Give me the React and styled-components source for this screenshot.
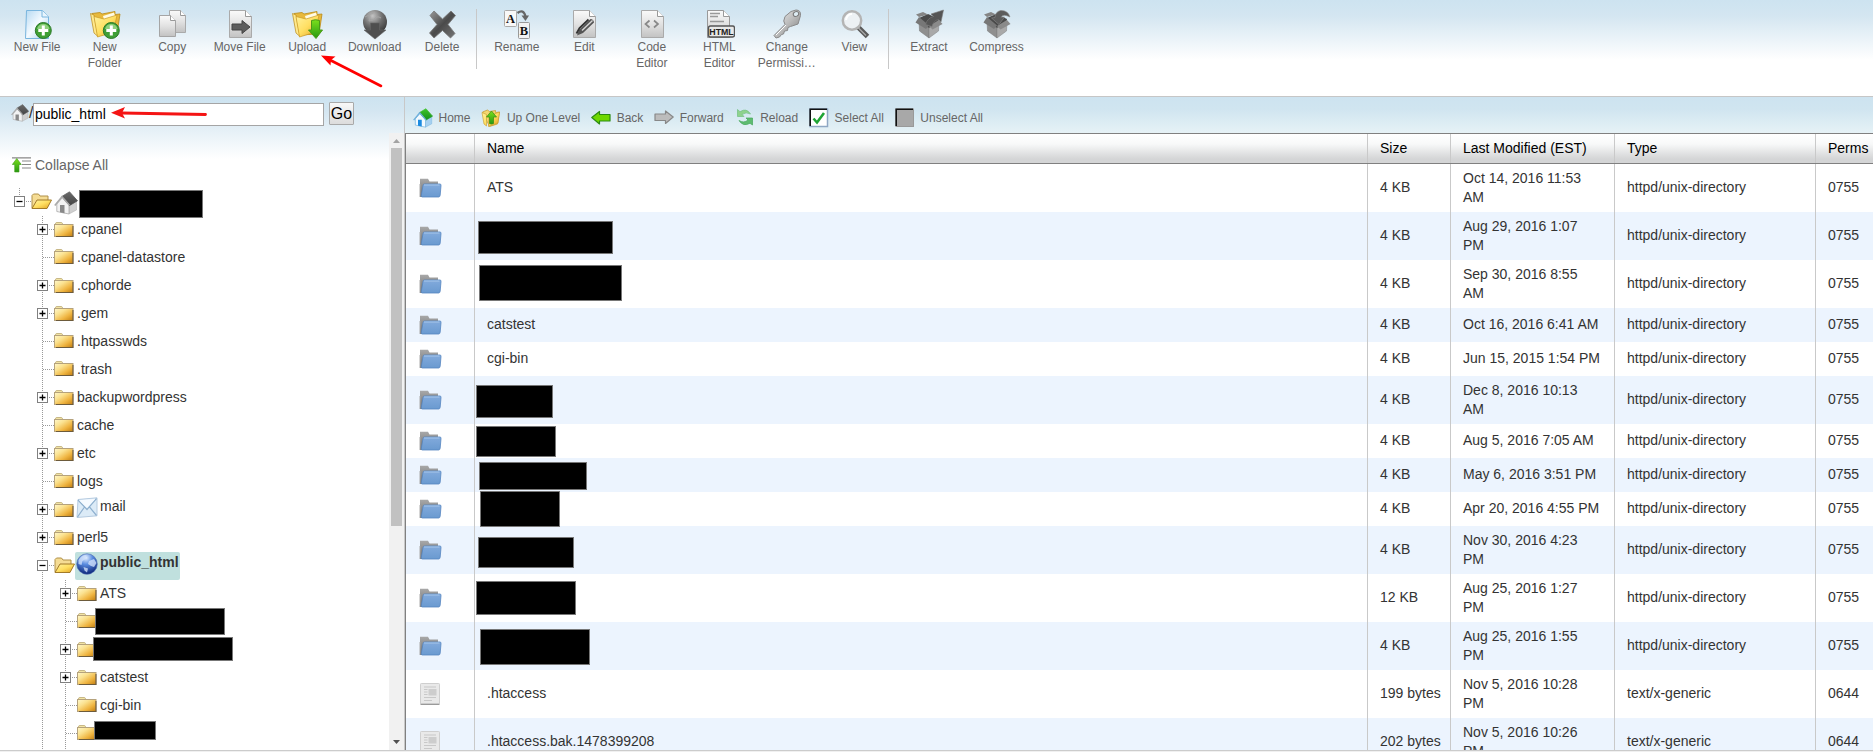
import React from "react";
import styled, { createGlobalStyle } from "styled-components";

const Global = createGlobalStyle`
  *, *::before, *::after { box-sizing: border-box; }
  html, body { margin: 0; padding: 0; overflow: hidden; }
  body { font-family: "Liberation Sans", Arial, sans-serif; font-size: 14px; color: #333; background: #fff; }
`;

const Page = styled.div`
  position: relative;
  display: flex;
  flex-direction: column;
  width: 1873px;
  height: 752px;
  overflow: hidden;
  background: #f0f0f0;
`;

const Toolbar = styled.div`
  flex: none;
  display: flex;
  align-items: flex-start;
  height: 97px;
  padding: 9px 0 0 3.4px;
  border-bottom: 1px solid #c6c6c6;
  background: linear-gradient(#cde3f0 0, #d4e6f1 16px, #fff 60px);
`;

const ToolGroup = styled.div`
  display: flex;
  height: 60px;
  & + & { border-left: 1px solid #c8c8c8; padding-left: 6.2px; }
`;

const Tool = styled.div`
  width: 67.5px;
  display: flex;
  flex-direction: column;
  align-items: center;
  font-size: 12px;
  line-height: 16px;
  color: #666;
  text-align: center;
  svg { flex: none; display: block; margin-bottom: -2px; }
`;

const Body = styled.div`
  flex: none;
  display: flex;
  height: 654px;
  border-bottom: 1px solid #ccc;
  background: #fff;
`;

const Sidebar = styled.div`
  flex: none;
  width: 405px;
  display: flex;
  flex-direction: column;
  border-right: 1px solid #c8c8c8;
  background: linear-gradient(#cde3f0 0, #d4e6f1 14px, #fff 62px) no-repeat;
`;

const PathBar = styled.div`
  flex: none;
  display: flex;
  align-items: flex-start;
  height: 36px;
  padding: 6px 0 0 11px;
  svg { flex: none; margin-top: 1px; }
`;

const Slash = styled.span`
  width: 4px;
  font-size: 16px;
  line-height: 20px;
`;

const PathInput = styled.input`
  width: 291px;
  height: 23px;
  padding: 0 1px 1px;
  border: 1px solid #a5a5a5;
  background: #fff;
  color: #000;
  font: 14px "Liberation Sans", Arial, sans-serif;
  outline: none;
`;

const GoButton = styled.button`
  width: 25px;
  height: 23px;
  margin: -1px 0 0 5px;
  padding: 0;
  border: 1px solid #a9a9a9;
  border-radius: 1px;
  background: linear-gradient(#f8f8f8, #dcdcdc);
  color: #000;
  font: 16px/20px "Liberation Sans", Arial, sans-serif;
`;

const SidebarScroll = styled.div`
  flex: 1;
  min-height: 0;
  display: flex;
`;

const SidebarContent = styled.div`
  flex: 1;
  min-width: 0;
  overflow: hidden;
`;

const Collapse = styled.div`
  display: flex;
  align-items: center;
  gap: 4px;
  height: 20px;
  margin: 22px 0 13px 12px;
  color: #666;
`;

const Scrollbar = styled.div`
  width: 15px;
  display: flex;
  flex-direction: column;
  align-items: center;
  background: #f1f1f1;
`;

const Thumb = styled.div`
  width: 11px;
  height: 378px;
  margin-bottom: auto;
  background: #c1c1c1;
`;

const ScrollArrow = styled.svg`
  flex: none;
  display: block;
`;

const TreeBranch = styled.div`
  margin-left: ${(p) => p.$indent}px;
  background: repeating-linear-gradient(#999 0 1px, transparent 1px 2px) 5px 0 / 1px 100% no-repeat;
`;

const TreeRow = styled.div`
  display: flex;
  align-items: center;
  height: 28px;
  position: relative;
`;

const RootRow = styled(TreeRow)`
  margin-left: 14px;
  background: repeating-linear-gradient(#999 0 1px, transparent 1px 2px) 5px 0 / 1px 10px no-repeat;
`;

const Toggle = styled.span`
  flex: none;
  position: relative;
  width: 17px;
  height: 11px;
  margin-top: -2px;
  &::before {
    content: "";
    position: absolute;
    left: 6px;
    right: 0;
    top: 5px;
    height: 1px;
    background: repeating-linear-gradient(90deg, #999 0 1px, transparent 1px 2px);
  }
  svg { position: relative; display: block; }
`;

const FolderSlot = styled.span`
  flex: none;
  width: 21px;
  height: 17px;
  margin-top: ${(p) => (p.$leaf ? -4 : -2)}px;
  svg { display: block; }
`;

const NodeLabel = styled.span`
  display: flex;
  align-items: flex-start;
  padding-left: 2px;
  height: 28px;
  line-height: 26px;
  white-space: nowrap;
  ${(p) => p.$icon && `
    padding: 1px 2px 0 1px;
    gap: 2px;
    line-height: 18px;
    border-radius: 2px;
  `}
  ${(p) => p.$selected && `
    background: #c0e0de;
    font-weight: bold;
    padding-right: 1px;
  `}
`;

const HomeSlot = styled.span`
  padding: 1px 0 0 2px;
  svg { display: block; }
`;

const Redaction = styled.span`
  position: absolute;
  z-index: 1;
  left: ${(p) => p.$x}px;
  top: ${(p) => p.$y}px;
  width: ${(p) => p.$w}px;
  height: ${(p) => p.$h}px;
  background: #000;
  border: 1px solid #777;
`;

const Main = styled.div`
  flex: 1;
  min-width: 0;
  display: flex;
  flex-direction: column;
`;

const ActionBar = styled.div`
  flex: none;
  display: flex;
  align-items: center;
  gap: 10.9px;
  height: 36px;
  padding: 6px 0 0 8px;
  background: linear-gradient(#cde3f0 0, #d0e5f0 12px, #e6f2f6 36px);
`;

const Action = styled.div`
  display: flex;
  align-items: center;
  gap: 5.5px;
  font-size: 12px;
  color: #666;
  svg { display: block; }
`;

const Table = styled.div`
  flex: 1;
  min-height: 0;
  overflow: hidden;
  border-left: 1px solid #808080;
`;

const columns = "68px 893px 83px 164px 201px 1fr";

const HeaderRow = styled.div`
  display: grid;
  grid-template-columns: ${columns};
  height: 31px;
  border-top: 1px solid #808080;
  border-bottom: 1px solid #808080;
  background: linear-gradient(#fff 0, #f8f9f9 10px, #d4d5d6 25px, #d4d5d6 100%);
  color: #000;
`;

const Row = styled.div`
  display: grid;
  grid-template-columns: ${columns};
  min-height: 34px;
  background: ${(p) => (p.$striped ? "#ecf4fe" : "#fff")};
`;

const Cell = styled.div`
  position: relative;
  display: flex;
  align-items: center;
  padding: ${(p) => (p.$wrapped ? "5px 0 5px 12px" : "4px 0 6px 12px")};
  line-height: 19px;
  white-space: pre;
  & + & { border-left: 1px solid #c9c9c9; }
`;

const HeadCell = styled(Cell)`
  padding: 0 0 1px 12px;
`;

const IconCell = styled(Cell)`
  padding: 0 0 0 13px;
`;

const Annotations = styled.svg`
  position: absolute;
  left: 0;
  top: 0;
  pointer-events: none;
`;

const Defs = styled.svg`
  position: absolute;
`;

const Grad = ({ id, stops, diag }) => (
  <linearGradient id={id} x1="0" y1="0" x2={diag ? "1" : "0"} y2="1">
    {stops.map((c, i) => (
      <stop key={i} offset={i / (stops.length - 1)} stopColor={c} />
    ))}
  </linearGradient>
);

const SharedDefs = () => (
  <Defs width="0" height="0">
    <defs>
      <Grad id="page" diag stops={["#b5d9f2", "#f4faff", "#9ccdf0"]} />
      <Grad id="grayPage" stops={["#fafafa", "#e2e2e2", "#c2c2c2"]} />
      <Grad id="yellow" diag stops={["#fff3a0", "#ffdf62", "#e0a020"]} />
      <Grad id="tree" diag stops={["#fff8cc", "#fbe290", "#efb440", "#c07c10"]} />
      <Grad id="green" stops={["#7be01c", "#259812"]} />
      <Grad id="roof" stops={["#3fc42c", "#14901a"]} />
      <Grad id="slate" stops={["#6a6a6a", "#444"]} />
      <Grad id="dark" diag stops={["#9a9a9a", "#4a4a4a", "#777"]} />
      <Grad id="metal" diag stops={["#f4f4f4", "#bbb", "#777"]} />
      <Grad id="blue" stops={["#82aadc", "#6a9ad0"]} />
      <Grad id="tab" stops={["#a8a8a8", "#6c6c6c"]} />
      <radialGradient id="ball" cx="0.4" cy="0.25" r="0.8">
        <stop offset="0" stopColor="#c4c4c4" />
        <stop offset="0.5" stopColor="#707070" />
        <stop offset="1" stopColor="#333" />
      </radialGradient>
      <radialGradient id="globe" cx="0.45" cy="0.2" r="0.8">
        <stop offset="0" stopColor="#e4f0ff" />
        <stop offset="0.4" stopColor="#5a8ce0" />
        <stop offset="1" stopColor="#0a2478" />
      </radialGradient>
    </defs>
  </Defs>
);

const Icon32 = ({ children }) => (
  <svg width="32" height="32" viewBox="0 0 32 32">{children}</svg>
);

const PlusBadge = () => (
  <g>
    <circle cx="22.300" cy="21.500" r="8" fill="#3f9f35" stroke="#2d7a2a" />
    <path d="M16 20a6.500 6.500 0 0 1 12.600 0z" fill="#8ed07c" />
    <path d="M22.300 16.500v10M17.300 21.500h10" stroke="#fff" strokeWidth="3" />
  </g>
);

const YellowFolder = () => (
  <g strokeLinejoin="round">
    <path d="M3 4.500l8-1 2 1.500 13-2.500v3l5-.5-3 20-20 1z" fill="#e8b93c" stroke="#b98a18" strokeWidth=".8" />
    <path d="M14 7l11-3.500 1.500 5-11 4z" fill="#fffbe4" />
    <path d="M1.500 4.500L5 6l4 21.500-4-3.500z" fill="#ffe98c" stroke="#b98a18" strokeWidth=".7" />
    <path d="M5 7.500l10 2.500 13-4L24.500 23 8.500 28z" fill="url(#yellow)" stroke="#c99a25" strokeWidth=".7" />
  </g>
);

const OpenBox = ({ children }) => (
  <Icon32>
    <path d="M6 9l9-4 11 5-1 5-9 5-10-5z" fill="#4a4a4a" />
    <path d="M6 12.500l10 6.500v10L6.500 22z" fill="#8f8f8f" stroke="#777" strokeWidth=".5" />
    <path d="M26 12.500L16 19v10l9.500-7z" fill="#a9a9a9" stroke="#808080" strokeWidth=".5" />
    <path d="M6 8l-3.500 5.500L13 20l3-3.500z" fill="#777" />
    <path d="M26 11l3.500 4L19.500 20.500 16 17z" fill="#8a8a8a" />
    <path d="M6 8L3 5.500l7-2.500 5 2.500z" fill="#858585" />
    {children}
  </Icon32>
);

const toolIcons = {
  newFile: (
    <Icon32>
      <path d="M5.500 1.500h16l6 6v22H4.500z" fill="url(#page)" stroke="#79b5de" />
      <path d="M21 1.500v6.500h7" fill="#e9f5fd" stroke="#79b5de" />
      <PlusBadge />
    </Icon32>
  ),
  newFolder: <Icon32><YellowFolder /><PlusBadge /></Icon32>,
  copy: (
    <Icon32>
      <path d="M13.500 1.500h11l5 5v17h-16z" fill="url(#grayPage)" stroke="#aaa" />
      <path d="M24.500 1.500v5h5" fill="#fff" stroke="#999" />
      <path d="M3.500 6.500h11l5 5v16h-16z" fill="url(#grayPage)" stroke="#a5a5a5" />
      <path d="M14.500 6.500v5h5" fill="#fff" stroke="#999" />
    </Icon32>
  ),
  move: (
    <Icon32>
      <path d="M5.500 1.500h16l6 6v21h-22z" fill="url(#grayPage)" stroke="#aaa" />
      <path d="M21.500 1.500v6h6" fill="#fff" stroke="#999" />
      <path d="M8 15h10v-3.500l8 6.500-8 6.500V21H8z" fill="#5d5d5d" stroke="#444" />
    </Icon32>
  ),
  upload: (
    <Icon32>
      <YellowFolder />
      <path d="M20.500 11.500q4-1.500 8 0V21h3l-6.500 8.500-7.500-8.500h3z" fill="url(#green)" stroke="#4a9a18" />
    </Icon32>
  ),
  download: (
    <Icon32>
      <circle cx="16" cy="13" r="12" fill="url(#ball)" />
      <path d="M10 4q2 4 0 8l4-1q4-5 8-2M6 8q6-3 10-5" stroke="#a4a4a4" fill="none" />
      <path d="M11.500 14h9v7H27L16 30 5 21h6.500z" fill="#4f4f4f" stroke="#666" strokeWidth=".6" />
    </Icon32>
  ),
  delete: (
    <Icon32>
      <path d="M8 2l8.500 8L25 2l4.500 4.500-7.500 9 7 9-4.500 4.500-8-7.500-8.500 7.500L3.500 24l7.500-8.500-7-9z" fill="url(#dark)" stroke="#777" strokeWidth=".8" />
    </Icon32>
  ),
  rename: (
    <Icon32>
      <rect x="3.500" y="1.500" width="12" height="16" rx="1" fill="#f8f8f8" stroke="#aaa" />
      <text x="9.500" y="13.500" fontFamily="Liberation Serif, serif" fontSize="12.500" fontWeight="bold" textAnchor="middle" fill="#111">A</text>
      <rect x="17.500" y="13.500" width="11" height="16" rx="1" fill="#f2f2f2" stroke="#999" />
      <text x="23" y="26" fontFamily="Liberation Serif, serif" fontSize="12.500" fontWeight="bold" textAnchor="middle" fill="#111">B</text>
      <path d="M16.500 4q6-4.500 8 3.500" stroke="#666" strokeWidth="2.200" fill="none" />
      <path d="M20.500 6.500h7.500l-3.500 5.500z" fill="#666" />
    </Icon32>
  ),
  edit: (
    <Icon32>
      <path d="M5.500 1.500h16l6 6v21h-22z" fill="url(#grayPage)" stroke="#aaa" />
      <path d="M21.500 1.500v6h6" fill="#fff" stroke="#999" />
      <path d="M22.500 10q3 0 3.500 3.500L15 24l-6 2.500 2-5.500z" fill="#555" />
      <path d="M14 21.500L24.500 11.500" stroke="#d5d5d5" strokeWidth="1.500" />
      <path d="M8.500 24.500l3-5.500 9-8.500" stroke="#333" strokeWidth="1.800" fill="none" />
    </Icon32>
  ),
  code: (
    <Icon32>
      <path d="M5.500 1.500h16l6 6v21h-22z" fill="url(#grayPage)" stroke="#aaa" />
      <path d="M21.500 1.500v6h6" fill="#fff" stroke="#999" />
      <path d="M13.500 11.500l-4 3.500 4 3.500M18 11.500l4 3.500-4 3.500" fill="none" stroke="#888" strokeWidth="1.700" />
    </Icon32>
  ),
  html: (
    <Icon32>
      <path d="M4.500 1.500h16l6 6v21h-22z" fill="url(#grayPage)" stroke="#999" />
      <path d="M20.500 1.500v6h6" fill="#fff" stroke="#999" />
      <path d="M7 4.500h10M7 7.500h8M7 12.500h14" stroke="#999" strokeWidth="1.300" />
      <rect x="5.500" y="17" width="26" height="11" rx="2" fill="#e8e8e8" stroke="#555" strokeWidth="1.400" />
      <text x="18.500" y="25.700" fontFamily="Liberation Sans, sans-serif" fontSize="8.800" fontWeight="bold" textAnchor="middle" fill="#222">HTML</text>
    </Icon32>
  ),
  key: (
    <Icon32>
      <path d="M3 26.500L14 15.500q-2.500-3 0-8L20 2.500l5-1.500q5 0 4.500 5.500L27 15l-7.500 2.500-2.500 1-.5 3-3 .5-1 3-2 .5-2 2.500-3.500 1z" fill="url(#metal)" stroke="#8a8a8a" />
      <ellipse cx="25" cy="5" rx="2.800" ry="2.300" fill="#ddebf2" stroke="#777" transform="rotate(-25 25 5)" />
      <path d="M5 26l10-10" stroke="#fff" />
    </Icon32>
  ),
  view: (
    <Icon32>
      <path d="M20.500 18.500l9 9" stroke="#5a5a5a" strokeWidth="5" />
      <path d="M20 18.500l8 8" stroke="#aaa" strokeWidth="1.200" />
      <circle cx="14" cy="11.500" r="9.200" fill="#edf1f4" stroke="#b4b4b4" strokeWidth="2.500" />
      <path d="M8 11q1-6 6-6" stroke="#fff" strokeWidth="2" fill="none" />
    </Icon32>
  ),
  extract: (
    <OpenBox>
      <path d="M12.500 15.500q2-6.500 8-8L18 5l12.500-4-2.500 12-2.500-2.500q-5 1-6.500 7z" fill="#555" stroke="#7c7c7c" strokeWidth=".6" />
    </OpenBox>
  ),
  compress: (
    <OpenBox>
      <path d="M29 8q-2-7-9.500-6.500Q14 3 14 8.500L10.500 9l7.500 6.500 5.500-7.500-3.500.3Q22 4.500 29 8z" fill="#5c5c5c" stroke="#888" strokeWidth=".6" />
    </OpenBox>
  ),
};

const House = ({ size, roof = "url(#slate)", wall = "#f2f2f2", side = "#cfcfcf", door = "#888", edge = "#aaa" }) => (
  <svg width={size} height={size} viewBox="0 0 24 24">
    <path d="M15 13.500l7.500-4V19L15 23z" fill={side} stroke={edge} strokeWidth=".5" />
    <path d="M2.800 13L8.500 6.500 15 14v9L2.800 20.500z" fill={wall} stroke={edge} strokeWidth=".8" />
    <path d="M7.800 5.500L15.500 .8l8 9-8 4.700z" fill={roof} stroke={roof} strokeWidth=".8" strokeLinejoin="round" />
    <path d="M.8 14.500L8 5.800l7.500 8.500" fill="none" stroke={edge} strokeWidth="1.600" />
    <path d="M6 14h4.500v8.200L6 21.300z" fill={door} />
  </svg>
);

const actionIcons = {
  home: <House size={20} roof="url(#roof)" wall="#f2faff" side="#a5d0f0" door="#1b8be0" edge="#6fb0dc" />,
  up: (
    <svg width="20" height="20" viewBox="0 0 20 20">
      <path d="M1.500 4l5-2 2 1.500 6-1v2l4-.5-2 12-8 2.500z" fill="#f3d670" stroke="#c69828" strokeWidth=".7" />
      <path d="M1 4.500l4.500 2V18L3 16zM18.500 4L17 15l-9.500 3.500L8 8z" fill="url(#yellow)" stroke="#c69828" strokeWidth=".6" />
      <path d="M10.500 3l5 6h-3v6.500q-2 1-4 0V9h-3z" fill="url(#green)" stroke="#3e9216" strokeWidth=".8" />
    </svg>
  ),
  back: (
    <svg width="20" height="20" viewBox="0 0 20 20">
      <path d="M.8 9.500l7.700-6v3h10.500V13H8.500v3z" fill="#6fd800" stroke="#2c8b12" strokeWidth="1.200" strokeLinejoin="round" />
    </svg>
  ),
  forward: (
    <svg width="20" height="20" viewBox="0 0 20 20">
      <path d="M19.200 9l-7.700-6v3H1v6.500h10.500v3z" fill="#bcbcbc" stroke="#888" strokeWidth="1.200" strokeLinejoin="round" />
    </svg>
  ),
  reload: (
    <svg width="20" height="20" viewBox="0 0 20 20">
      <path d="M2.500 1.500v7h6.500L7 6.500q4-3 8.500-.5-4-6.500-10.500-2.300z" fill="#8fd28d" stroke="#70c080" strokeWidth=".7" />
      <path d="M17.500 17v-7H11l2 2q-4 3.500-9 .5 4 6.500 11 2.800z" fill="#5fbc70" stroke="#45a75a" strokeWidth=".7" />
    </svg>
  ),
  select: (
    <svg width="20" height="20" viewBox="0 0 20 20">
      <rect x="1" y="1" width="17.500" height="17.500" fill="#fff" stroke="#8fa8c4" strokeWidth="1.500" />
      <path d="M18 1.200H1.200V18" fill="none" stroke="#111" strokeWidth="1.600" />
      <path d="M4.500 10.500l3.500 4 7-9.500" fill="none" stroke="#20a535" strokeWidth="2.600" />
    </svg>
  ),
  unselect: (
    <svg width="20" height="20" viewBox="0 0 20 20">
      <rect x="1" y="1" width="17.500" height="17.500" fill="#a8a8a8" stroke="#999" />
      <path d="M18 1.200H1.200V18" fill="none" stroke="#111" strokeWidth="1.600" />
    </svg>
  ),
};

const TreeFolder = ({ open }) => (
  <svg width="21" height="17" viewBox="0 0 21 17">
    {open ? (
      <g>
        <path d="M1 15V2.500l1.500-1.500h5l1.500 2h8v5" fill="#f5dc94" stroke="#b09048" />
        <path d="M1 15.500L6 7h14.500l-4.500 8.500z" fill="url(#yellow)" stroke="#a27a28" />
      </g>
    ) : (
      <g>
        <path d="M1 3.500L2.200 1.500h5.500l1.300 2z" fill="#f2e4a4" stroke="#c8b888" />
        <rect x=".5" y="3.500" width="18.500" height="12" fill="url(#tree)" stroke="#b5a27c" />
        <path d="M2 15.500h17V5" fill="none" stroke="#3e2c10" strokeOpacity=".6" strokeWidth="1.200" />
      </g>
    )}
  </svg>
);

const ToggleBox = ({ minus }) => (
  <svg width="11" height="11" viewBox="0 0 11 11">
    <rect x=".5" y=".5" width="10" height="10" fill="#fff" stroke="#808080" />
    <path d={minus ? "M2.500 5.500h6" : "M2.500 5.500h6M5.500 2.500v6"} stroke="#000" strokeWidth="1.300" />
  </svg>
);

const Mail = () => (
  <svg width="22" height="22" viewBox="0 0 22 22">
    <path d="M2 2.500L21 .8v18L1 20.500z" fill="#dcebf7" stroke="#b6cbe0" />
    <path d="M2 3l9 9.500L20.500 1.500M1.500 20l7-10M20.500 18.500L13.500 10" fill="none" stroke="#8fb0cf" strokeWidth="1.200" />
    <path d="M3 3.200L11 11l8.500-9.200z" fill="#f5faff" />
  </svg>
);

const Globe = () => (
  <svg width="22" height="22" viewBox="0 0 22 22">
    <circle cx="11" cy="11" r="10.300" fill="url(#globe)" stroke="#4b6ab0" strokeWidth=".6" />
    <path d="M2.500 7q3-5 8-5l-1 4-3 2-1 4-3-1zM13 8l5-2 2.500 4-2.500 4-3-1-3-2zM7.500 14l4.500 1.500-1 4-2.500-2z" fill="#cfe0fa" fillOpacity=".8" />
  </svg>
);

const BlueFolder = () => (
  <svg width="23" height="20" viewBox="0 0 23 20">
    <path d="M1 19V.8h8l1.500 2.700H19V10L5 19z" fill="url(#tab)" />
    <path d="M1 19V6" stroke="#aaa" />
    <path d="M4 7.500q.2-1.500 1.500-1.500H21q1.200 0 1 1.500l-.8 9.500q-.2 2-1.500 2H3.300q-1.300 0-1-1.500z" fill="url(#blue)" stroke="#5585c0" strokeWidth=".8" />
    <path d="M5 7h15.500" stroke="#a7c6ea" />
  </svg>
);

const Document = () => (
  <svg width="22" height="22" viewBox="0 0 22 22">
    <rect x="1.500" y=".5" width="19" height="20.500" rx=".8" fill="#e9e9e9" stroke="#cfcfcf" />
    <path d="M1.500 21.300h19" stroke="#888" />
    <path d="M5 4h12M5 6.500h3.500M5 9h3.500M5 11.500h3.500M5 14.500h12M5 17.500h8" stroke="#c8c8c8" strokeWidth="1.100" />
    <rect x="9.500" y="6" width="8" height="6.500" fill="#cdcdcd" />
  </svg>
);

const CollapseIcon = () => (
  <svg width="19" height="16" viewBox="0 0 19 16">
    <path d="M0 .8h19M10 4h9M10 7.500h9M10 11h9" stroke="#888" strokeWidth="1.200" />
    <path d="M4.800 1.500l4.500 6H7v7.500H2.700V7.500H.3z" fill="url(#green)" stroke="#3f9c18" strokeWidth=".6" />
  </svg>
);

const toolGroups = [
  [["newFile", "New File"], ["newFolder", "New\nFolder"], ["copy", "Copy"], ["move", "Move File"], ["upload", "Upload"], ["download", "Download"], ["delete", "Delete"]],
  [["rename", "Rename"], ["edit", "Edit"], ["code", "Code\nEditor"], ["html", "HTML\nEditor"], ["key", "Change\nPermissi…"], ["view", "View"]],
  [["extract", "Extract"], ["compress", "Compress"]],
];

const ToolLabel = styled.span`
  white-space: pre;
`;

const actions = [
  ["home", "Home"], ["up", "Up One Level"], ["back", "Back"], ["forward", "Forward"],
  ["reload", "Reload"], ["select", "Select All"], ["unselect", "Unselect All"],
];

const tree = [
  { name: ".cpanel", kids: true },
  { name: ".cpanel-datastore" },
  { name: ".cphorde", kids: true },
  { name: ".gem", kids: true },
  { name: ".htpasswds" },
  { name: ".trash" },
  { name: "backupwordpress", kids: true },
  { name: "cache" },
  { name: "etc", kids: true },
  { name: "logs" },
  { name: "mail", kids: true, icon: <Mail /> },
  { name: "perl5", kids: true },
  { name: "public_html", kids: true, open: true, selected: true, icon: <Globe /> },
];

const subtree = [
  { name: "ATS", kids: true },
  { box: [35, 0, 130, 27] },
  { box: [33, 1, 140, 24], kids: true },
  { name: "catstest", kids: true },
  { name: "cgi-bin" },
  { box: [34, 1, 62, 19] },
];

const D = "httpd/unix-directory";
const T = "text/x-generic";
const files = [
  ["ATS", "4 KB", "Oct 14, 2016 11:53\nAM", D, "0755"],
  [[3, 9, 135, 33], "4 KB", "Aug 29, 2016 1:07\nPM", D, "0755"],
  [[4, 5, 143, 36], "4 KB", "Sep 30, 2016 8:55\nAM", D, "0755"],
  ["catstest", "4 KB", "Oct 16, 2016 6:41 AM", D, "0755"],
  ["cgi-bin", "4 KB", "Jun 15, 2015 1:54 PM", D, "0755"],
  [[1, 9, 77, 33], "4 KB", "Dec 8, 2016 10:13\nAM", D, "0755"],
  [[1, 2, 80, 31], "4 KB", "Aug 5, 2016 7:05 AM", D, "0755"],
  [[4, 4, 108, 28], "4 KB", "May 6, 2016 3:51 PM", D, "0755"],
  [[5, -1, 80, 36], "4 KB", "Apr 20, 2016 4:55 PM", D, "0755"],
  [[3, 11, 96, 31], "4 KB", "Nov 30, 2016 4:23\nPM", D, "0755"],
  [[1, 7, 100, 34], "12 KB", "Aug 25, 2016 1:27\nPM", D, "0755"],
  [[5, 7, 110, 36], "4 KB", "Aug 25, 2016 1:55\nPM", D, "0755"],
  [".htaccess", "199 bytes", "Nov 5, 2016 10:28\nPM", T, "0644"],
  [".htaccess.bak.1478399208", "202 bytes", "Nov 5, 2016 10:26\nPM", T, "0644"],
];

const Box = ({ box: [x, y, w, h] }) => <Redaction $x={x} $y={y} $w={w} $h={h} />;

const Node = ({ name, kids, open, selected, icon, box }) => (
  <TreeRow>
    <Toggle>{kids && <ToggleBox minus={open} />}</Toggle>
    <FolderSlot $leaf={!kids}><TreeFolder open={open} /></FolderSlot>
    {box ? <Box box={box} /> : (
      <NodeLabel $icon={!!icon} $selected={selected}>{icon}<span>{name}</span></NodeLabel>
    )}
  </TreeRow>
);

export default function App() {
  return (
    <Page>
      <Global />
      <SharedDefs />
      <Toolbar>
        {toolGroups.map((group, i) => (
          <ToolGroup key={i}>
            {group.map(([icon, label]) => (
              <Tool key={icon}>{toolIcons[icon]}<ToolLabel>{label}</ToolLabel></Tool>
            ))}
          </ToolGroup>
        ))}
      </Toolbar>
      <Body>
        <Sidebar>
          <PathBar>
            <House size={18} />
            <Slash>/</Slash>
            <PathInput defaultValue="public_html" />
            <GoButton>Go</GoButton>
          </PathBar>
          <SidebarScroll>
            <SidebarContent>
              <Collapse><CollapseIcon />Collapse All</Collapse>
              <RootRow>
                <Toggle><ToggleBox minus /></Toggle>
                <FolderSlot><TreeFolder open /></FolderSlot>
                <HomeSlot><House size={24} /></HomeSlot>
                <Box box={[65, 2, 124, 28]} />
              </RootRow>
              <TreeBranch $indent={37}>
                {tree.map((n) => <Node key={n.name} {...n} />)}
                <TreeBranch $indent={23}>
                  {subtree.map((n, i) => <Node key={i} {...n} />)}
                  <TreeRow />
                </TreeBranch>
              </TreeBranch>
            </SidebarContent>
            <Scrollbar>
              <ScrollArrow width="15" height="15"><path d="M4 10h7l-3.500-4z" fill="#a3a3a3" /></ScrollArrow>
              <Thumb />
              <ScrollArrow width="15" height="15"><path d="M4 5h7l-3.500 4z" fill="#505050" /></ScrollArrow>
            </Scrollbar>
          </SidebarScroll>
        </Sidebar>
        <Main>
          <ActionBar>
            {actions.map(([icon, label]) => (
              <Action key={icon}>{actionIcons[icon]}{label}</Action>
            ))}
          </ActionBar>
          <Table>
            <HeaderRow>
              {["", "Name", "Size", "Last Modified (EST)", "Type", "Perms"].map((h) => (
                <HeadCell key={h}>{h}</HeadCell>
              ))}
            </HeaderRow>
            {files.map(([name, size, date, type, perms], i) => (
              <Row key={i} $striped={i % 2 === 1}>
                <IconCell>{type === D ? <BlueFolder /> : <Document />}</IconCell>
                <Cell>{Array.isArray(name) ? <Box box={name} /> : name}</Cell>
                <Cell>{size}</Cell>
                <Cell $wrapped={date.includes("\n")}>{date}</Cell>
                <Cell>{type}</Cell>
                <Cell>{perms}</Cell>
              </Row>
            ))}
          </Table>
        </Main>
      </Body>
      <Annotations width="400" height="130">
        <path d="M381 86L330 60" stroke="#f00" strokeWidth="2.600" strokeLinecap="round" />
        <path d="M321 55.500l14.500 1-4.500 3.500-.5 5.500z" fill="#f00" />
        <path d="M205.500 114.500L122 113" stroke="#f41414" strokeWidth="2.800" strokeLinecap="round" />
        <path d="M111 112.700l14-5.700-3 6 3 5.500z" fill="#f41414" />
      </Annotations>
    </Page>
  );
}
